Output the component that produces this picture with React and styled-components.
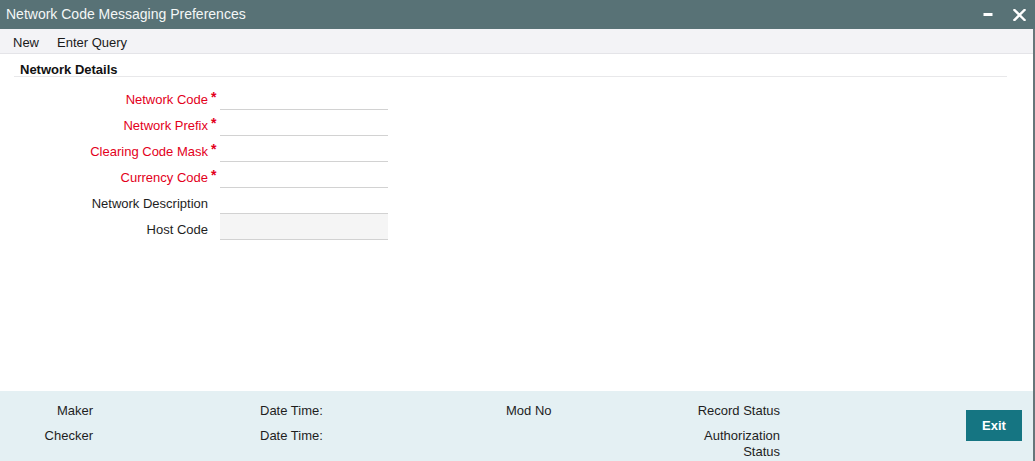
import React from "react";
import styled, { createGlobalStyle } from "styled-components";

const GlobalStyle = createGlobalStyle`
  html, body {
    margin: 0;
    padding: 0;
    background: #ffffff;
  }
  body {
    font-family: "Liberation Sans", Arial, sans-serif;
    font-size: 13px;
    color: #1e1e1e;
  }
  * { box-sizing: border-box; }
`;

const Window = styled.div`
  width: 1035px;
  height: 461px;
  display: flex;
  flex-direction: column;
  overflow: hidden;
  background: #ffffff;
`;

const TitleBar = styled.div`
  height: 29px;
  flex: 0 0 29px;
  background: #587276;
  color: #f4f7f7;
  display: flex;
  align-items: center;
  justify-content: space-between;
  padding: 0 9px 0 6px;
  font-size: 14px;
  line-height: 29px;
`;

const TitleText = styled.span`
  white-space: nowrap;
`;

const WindowControls = styled.div`
  display: flex;
  align-items: center;
  gap: 19px;
`;

const ControlButton = styled.span`
  display: inline-flex;
  align-items: center;
  justify-content: center;
  width: 13px;
  height: 13px;
`;

const Body = styled.div`
  flex: 1;
  display: flex;
  flex-direction: column;
  border-right: 2px solid #66767a;
  min-height: 0;
`;

const Toolbar = styled.div`
  height: 25px;
  flex: 0 0 25px;
  background: #f3f3f6;
  border-bottom: 1px solid #e4e4e8;
  display: flex;
  gap: 18px;
  padding: 3px 0 0 13px;
  line-height: 21px;
  color: #1a1a1a;
`;

const ToolbarItem = styled.span`
  cursor: pointer;
`;

const Content = styled.div`
  flex: 1;
  min-height: 0;
`;

const SectionHeader = styled.div`
  margin: 10px 26px 0 14px;
  padding-left: 6px;
  line-height: 12px;
  font-weight: bold;
  color: #111;
  border-bottom: 1px solid #e8e8ea;
`;

const FieldGrid = styled.div`
  display: grid;
  grid-template-columns: 208px 12px 168px;
  grid-auto-rows: 26px;
  margin-top: 7px;
`;

const FieldLabel = styled.label`
  display: flex;
  align-items: flex-end;
  justify-content: flex-end;
  padding-bottom: 3px;
  line-height: 15px;
  white-space: nowrap;
  color: ${(p) => (p.$required ? "#e3001b" : "#1e1e1e")};
`;

const StarCell = styled.span`
  display: flex;
  align-items: flex-end;
  padding: 0 0 5px 3px;
  line-height: 15px;
  color: #e3001b;
  font-weight: bold;
  font-size: 14px;
`;

const TextInput = styled.input`
  height: 26px;
  width: 168px;
  border: 0;
  border-bottom: 1px solid #d2d2d2;
  background: ${(p) => (p.disabled ? "#f5f5f5" : "transparent")};
  outline: none;
  font-family: inherit;
  font-size: 13px;
  padding: 0 4px;
`;

const Footer = styled.div`
  height: 70px;
  flex: 0 0 70px;
  background: #e4f0f3;
  display: flex;
  align-items: flex-start;
  padding-top: 12px;
`;

const FooterGrid = styled.div`
  display: grid;
  grid-template-columns: 93px 167px 246px 184px 90px;
  row-gap: 9px;
  line-height: 16px;
  color: #1e1e1e;
`;

const FooterLabel = styled.span`
  grid-column: ${(p) => p.$col};
  text-align: ${(p) => (p.$right ? "right" : "left")};
`;

const ExitButton = styled.button`
  margin: 7px 11px 0 auto;
  width: 56px;
  height: 31px;
  border: 0;
  background: #157582;
  color: #ffffff;
  font-family: inherit;
  font-weight: bold;
  font-size: 13px;
  cursor: pointer;
`;

const fields = [
  { label: "Network Code", required: true },
  { label: "Network Prefix", required: true },
  { label: "Clearing Code Mask", required: true },
  { label: "Currency Code", required: true },
  { label: "Network Description", required: false },
  { label: "Host Code", required: false, disabled: true },
];

export default function App() {
  return (
    <>
      <GlobalStyle />
      <Window>
        <TitleBar>
          <TitleText>Network Code Messaging Preferences</TitleText>
          <WindowControls>
            <ControlButton>
              <svg width="10" height="13" viewBox="0 0 10 13">
                <rect x="0.5" y="5" width="9" height="3" fill="#ffffff" />
              </svg>
            </ControlButton>
            <ControlButton>
              <svg width="13" height="12" viewBox="0 0 13 12">
                <path
                  d="M1.5 1 L11.5 11 M11.5 1 L1.5 11"
                  stroke="#ffffff"
                  strokeWidth="2.4"
                  strokeLinecap="square"
                />
              </svg>
            </ControlButton>
          </WindowControls>
        </TitleBar>
        <Body>
          <Toolbar>
            <ToolbarItem>New</ToolbarItem>
            <ToolbarItem>Enter Query</ToolbarItem>
          </Toolbar>
          <Content>
            <SectionHeader>Network Details</SectionHeader>
            <FieldGrid>
              {fields.map((f) => (
                <React.Fragment key={f.label}>
                  <FieldLabel $required={f.required}>{f.label}</FieldLabel>
                  <StarCell>{f.required ? "*" : ""}</StarCell>
                  <TextInput type="text" disabled={f.disabled} />
                </React.Fragment>
              ))}
            </FieldGrid>
          </Content>
          <Footer>
            <FooterGrid>
              <FooterLabel $col={1} $right>Maker</FooterLabel>
              <FooterLabel $col={3}>Date Time:</FooterLabel>
              <FooterLabel $col={4}>Mod No</FooterLabel>
              <FooterLabel $col={5} $right>Record Status</FooterLabel>
              <FooterLabel $col={1} $right>Checker</FooterLabel>
              <FooterLabel $col={3}>Date Time:</FooterLabel>
              <FooterLabel $col={5} $right>Authorization Status</FooterLabel>
            </FooterGrid>
            <ExitButton>Exit</ExitButton>
          </Footer>
        </Body>
      </Window>
    </>
  );
}
